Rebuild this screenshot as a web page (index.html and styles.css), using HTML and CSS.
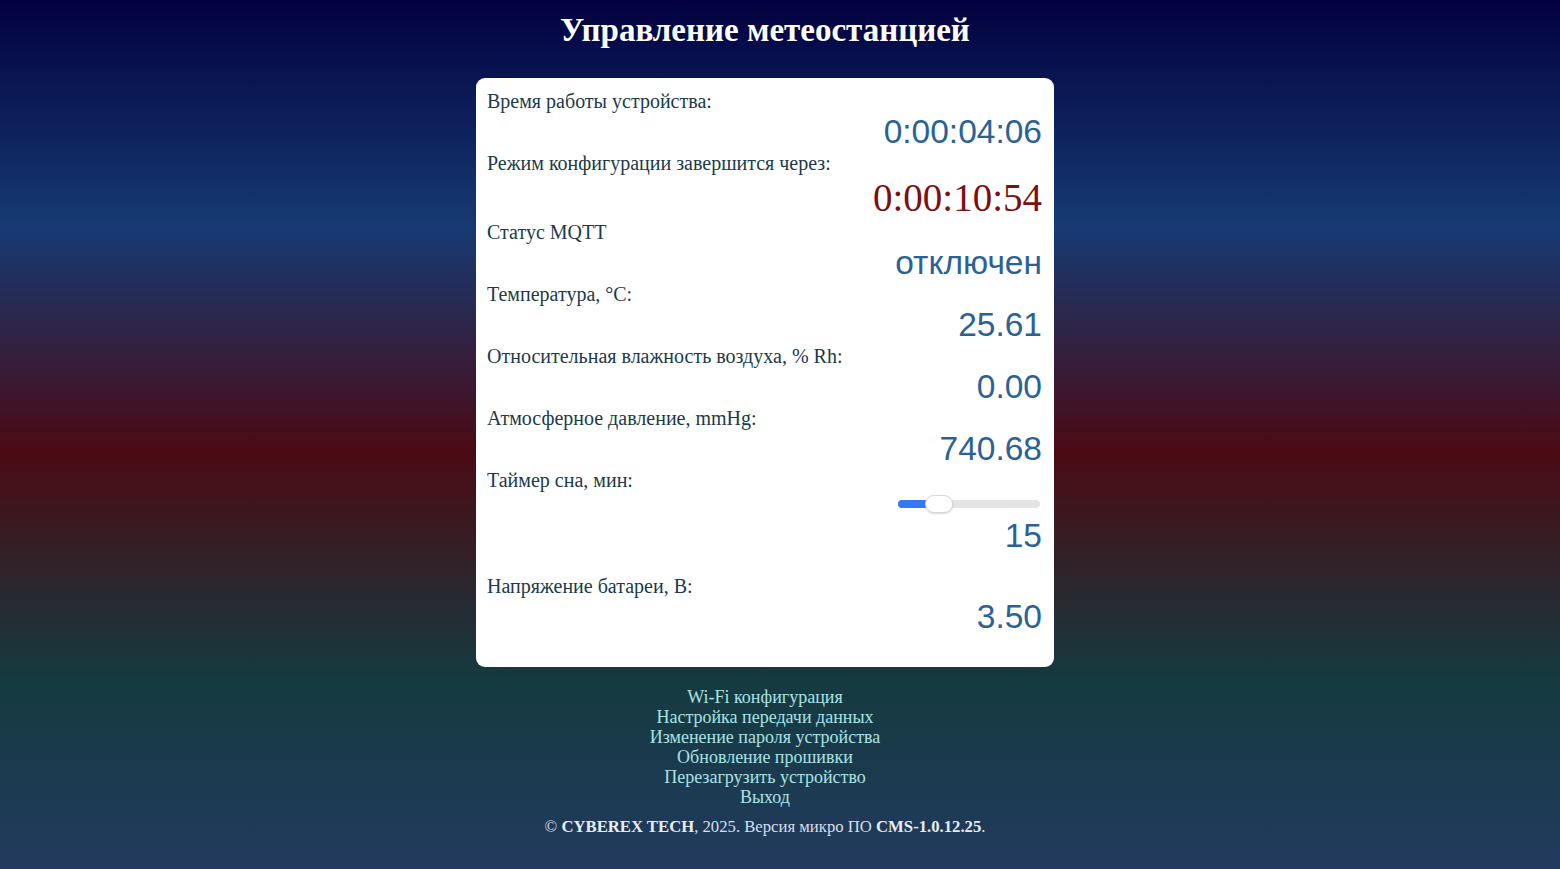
FILE: index.html
```html
<!DOCTYPE html>
<html lang="ru">
<head>
<meta charset="utf-8">
<title>Управление метеостанцией</title>
<link rel="stylesheet" href="styles.css">
</head>
<body>
<div class="page">
  <h1 class="title">Управление метеостанцией</h1>
  <div class="card">
    <div class="label">Время работы устройства:</div>
    <div class="value">0:00:04:06</div>
    <div class="label">Режим конфигурации завершится через:</div>
    <div class="value value-red">0:00:10:54</div>
    <div class="label">Статус MQTT</div>
    <div class="value">отключен</div>
    <div class="label">Температура, °C:</div>
    <div class="value">25.61</div>
    <div class="label">Относительная влажность воздуха, % Rh:</div>
    <div class="value">0.00</div>
    <div class="label">Атмосферное давление, mmHg:</div>
    <div class="value">740.68</div>
    <div class="label">Таймер сна, мин:</div>
    <div class="slider-row">
      <div class="slider">
        <div class="slider-fill"></div>
        <div class="slider-thumb"></div>
      </div>
    </div>
    <div class="value value-slider">15</div>
    <div class="label">Напряжение батареи, В:</div>
    <div class="value">3.50</div>
  </div>
  <nav class="links">
    <a href="#">Wi-Fi конфигурация</a>
    <a href="#">Настройка передачи данных</a>
    <a href="#">Изменение пароля устройства</a>
    <a href="#">Обновление прошивки</a>
    <a href="#">Перезагрузить устройство</a>
    <a href="#">Выход</a>
  </nav>
  <div class="footer">© <b>CYBEREX TECH</b>, 2025. Версия микро ПО <b>CMS-1.0.12.25</b>.</div>
</div>
</body>
</html>
```
FILE: styles.css
```css
html, body {
  margin: 0;
  padding: 0;
}
body {
  min-height: 869px;
  font-family: "Liberation Serif", "Times New Roman", serif;
  background: linear-gradient(180deg,
    #02013f 0%,
    #163a73 26%,
    #4b0a14 52%,
    #153a3f 78%,
    #223a5f 100%);
}
.page {
  display: flex;
  flex-direction: column;
  align-items: center;
  padding-right: 30px;
}
.title {
  margin: 10px 0 0;
  height: 68px;
  font-size: 33px;
  line-height: 40px;
  font-weight: bold;
  color: #ffffff;
}
.card {
  box-sizing: border-box;
  width: 578px;
  background: #ffffff;
  border-radius: 9px;
  padding: 12px 12px 30px 11px;
  display: flex;
  flex-direction: column;
}
.label {
  height: 22px;
  font-size: 20px;
  line-height: 22px;
  color: #1b3a4b;
}
.value {
  height: 40px;
  font-family: "Liberation Sans", Arial, sans-serif;
  font-size: 33.5px;
  line-height: 40px;
  color: #2a6296;
  text-align: right;
}
.value-red {
  height: 47px;
  line-height: 47px;
  font-family: "Liberation Serif", "Times New Roman", serif;
  font-size: 39px;
  color: #7a1010;
}
.slider-row {
  height: 26px;
  display: flex;
  justify-content: flex-end;
  align-items: center;
  padding-right: 2px;
}
.slider {
  position: relative;
  width: 142px;
  height: 8px;
  border-radius: 4px;
  background: #e5e5e5;
}
.slider-fill {
  width: 34px;
  height: 8px;
  border-radius: 4px;
  background: #3478f6;
}
.slider-thumb {
  position: absolute;
  left: 27px;
  top: -5px;
  box-sizing: border-box;
  width: 28px;
  height: 18px;
  border-radius: 9px;
  background: #ffffff;
  border: 1px solid #d8d8d8;
  box-shadow: 0 1px 2px rgba(0,0,0,0.15);
}
.value-slider {
  height: 38px;
  line-height: 38px;
  margin-bottom: 20px;
}
.links {
  margin-top: 20px;
  display: flex;
  flex-direction: column;
  align-items: center;
}
.links a {
  font-size: 18px;
  line-height: 20px;
  color: #a9e3e3;
  text-decoration: none;
}
.footer {
  margin-top: 10px;
  font-size: 16.7px;
  line-height: 20px;
  color: #d9dee8;
}
.footer b {
  color: #e8ecf2;
}
```
